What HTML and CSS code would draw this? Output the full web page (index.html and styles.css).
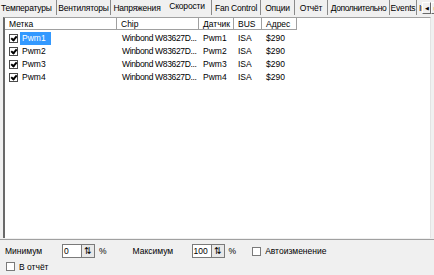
FILE: index.html
```html
<!DOCTYPE html>
<html lang="ru">
<head>
  <meta charset="UTF-8">
  <title>Скорости</title>
  <link rel="stylesheet" href="styles.css">
</head>
<body>
  <div class="window">
    <div class="tabs">
      <span class="tab t1">Температуры</span>
      <span class="tab t2">Вентиляторы</span>
      <span class="tab t3 pre">Напряжения</span>
      <span class="tab t4 active">Скорости</span>
      <span class="tab t5">Fan Control</span>
      <span class="tab t6">Опции</span>
      <span class="tab t7">Отчёт</span>
      <span class="tab t8">Дополнительно</span>
      <span class="tab t9">Events</span>
      <span class="tab last">Ir</span>
      <div class="arrows">
        <span class="arrow">&#9664;</span>
        <span class="arrow">&#9654;</span>
      </div>
    </div>

    <div class="list">
      <div class="head">
        <span class="col c1">Метка</span>
        <span class="col c2">Chip</span>
        <span class="col c3">Датчик</span>
        <span class="col c4">BUS</span>
        <span class="col c5">Адрес</span>
      </div>
      <div class="row">
        <span class="c1"><i class="check on"></i><b class="sel">Pwm1</b></span>
        <span class="c2">Winbond W83627D...</span>
        <span class="c3">Pwm1</span>
        <span class="c4">ISA</span>
        <span class="c5">$290</span>
      </div>
      <div class="row">
        <span class="c1"><i class="check on"></i><b>Pwm2</b></span>
        <span class="c2">Winbond W83627D...</span>
        <span class="c3">Pwm2</span>
        <span class="c4">ISA</span>
        <span class="c5">$290</span>
      </div>
      <div class="row">
        <span class="c1"><i class="check on"></i><b>Pwm3</b></span>
        <span class="c2">Winbond W83627D...</span>
        <span class="c3">Pwm3</span>
        <span class="c4">ISA</span>
        <span class="c5">$290</span>
      </div>
      <div class="row">
        <span class="c1"><i class="check on"></i><b>Pwm4</b></span>
        <span class="c2">Winbond W83627D...</span>
        <span class="c3">Pwm4</span>
        <span class="c4">ISA</span>
        <span class="c5">$290</span>
      </div>
    </div>

    <div class="panel">
      <div class="line">
        <span class="lbl min">Минимум</span>
        <span class="spin"><span class="val">0</span><span class="btn">&#8645;</span></span>
        <span class="pct">%</span>
        <span class="lbl max">Максимум</span>
        <span class="spin"><span class="val">100</span><span class="btn">&#8645;</span></span>
        <span class="pct">%</span>
        <i class="check"></i><span class="opt">Автоизменение</span>
      </div>
      <div class="line">
        <i class="check"></i><span class="opt">В отчёт</span>
      </div>
    </div>
  </div>
</body>
</html>
```

FILE: styles.css
```css
body {
  margin: 0;
  background: #f0f0f0;
  font-family: "Liberation Sans", Arial, sans-serif;
  font-size: 8.5px;
  color: #000;
}

.window {
  width: 434px;
  height: 275px;
  overflow: hidden;
}

.tabs {
  display: flex;
  height: 15px;
  align-items: flex-start;
  white-space: nowrap;
  overflow: hidden;
}

.tab {
  padding-top: 3px;
  height: 12px;
  box-sizing: content-box;
  border-right: 1px solid #8a8a8a;
  flex: none;
  overflow: hidden;
  text-align: center;
  letter-spacing: -0.2px;
}

.t1 { text-align: left; padding-left: 1px; width: 55px; }
.t2 { width: 53px; }
.t3 { width: 52px; }
.t4 { width: 48px; }
.t5 { width: 48px; }
.t6 { width: 33px; }
.t7 { width: 32px; }
.t8 { width: 61px; letter-spacing: -0.45px; }
.t9 { width: 26px; }

.tab.pre {
  border-right: none;
}

.tab.active {
  background: #f0f0f0;
  padding-top: 1px;
  height: 14px;
}

.tab.last {
  border-right: none;
  width: 3px;
  padding-left: 2px;
  text-align: left;
}

.arrows {
  display: flex;
  margin-left: auto;
  margin-top: 2px;
}

.arrow {
  width: 9px;
  height: 12px;
  box-sizing: border-box;
  border: 1px solid;
  border-color: #fff #696969 #696969 #fff;
  background: #f0f0f0;
  font-size: 5px;
  line-height: 10px;
  text-align: center;
}

.list {
  margin: 2px 3px 0 3px;
  height: 220px;
  background: #fff;
  border-top: 1px solid #a0a0a0;
  border-left: 2px solid #696969;
  border-right: 1px solid #e3e3e3;
  white-space: nowrap;
}

.head,
.row {
  display: flex;
  height: 13px;
  line-height: 13px;
}

.head {
  height: 12px;
  line-height: 12px;
  margin-bottom: 2px;
}

.head .col {
  box-sizing: border-box;
  padding-left: 4px;
  border-right: 1px solid #a0a0a0;
  border-bottom: 1px solid #a0a0a0;
}

.c1 { width: 112px; flex: none; }
.c2 { width: 82px; flex: none; }
.c3 { width: 35px; flex: none; }
.c4 { width: 28px; flex: none; }
.c5 { width: 35px; flex: none; }

.row span {
  overflow: hidden;
}

.row .c2,
.row .c3,
.row .c4,
.row .c5 {
  padding-left: 4px;
  box-sizing: border-box;
}

.row .c2 {
  padding-left: 5px;
  letter-spacing: -0.35px;
}

.row .c1 {
  display: flex;
  align-items: center;
}

.row b {
  font-weight: normal;
  padding: 0 2px;
  margin-left: 2px;
}

.row b.sel {
  background: #3399ff;
  color: #fff;
  padding-right: 5px;
}

.check {
  display: inline-block;
  width: 9px;
  height: 9px;
  box-sizing: border-box;
  border: 1px solid #4a4a4a;
  background: #fff;
  margin-left: 4px;
  position: relative;
  flex: none;
}

.check.on::after {
  content: "";
  position: absolute;
  left: 2px;
  top: 0;
  width: 2px;
  height: 4px;
  border: solid #000;
  border-width: 0 2px 2px 0;
  transform: rotate(40deg);
}

.panel {
  border-top: 1px solid #a0a0a0;
  margin-top: 1px;
  padding-top: 3px;
}

.line {
  display: flex;
  align-items: center;
  height: 16px;
}

.lbl.min {
  margin-left: 5px;
  width: 57px;
}

.lbl.max {
  margin-left: 26px;
  width: 59px;
}

.spin {
  display: flex;
  height: 14px;
  border: 1px solid #7a7a7a;
  box-sizing: border-box;
  background: #fff;
}

.val {
  width: 17px;
  padding-left: 1px;
  line-height: 12px;
}

.btn {
  width: 12px;
  background: #e8e8e8;
  border-left: 1px solid #7a7a7a;
  font-size: 9px;
  line-height: 12px;
  text-align: center;
}

.pct {
  margin-left: 4px;
}

.line .check {
  border-color: #7a7a7a;
}

.line:first-child .check {
  margin-left: 16px;
}

.opt {
  margin-left: 4px;
}

.line:last-child .check {
  margin-left: 6px;
}

.line:last-child {
  height: 15px;
}
```
